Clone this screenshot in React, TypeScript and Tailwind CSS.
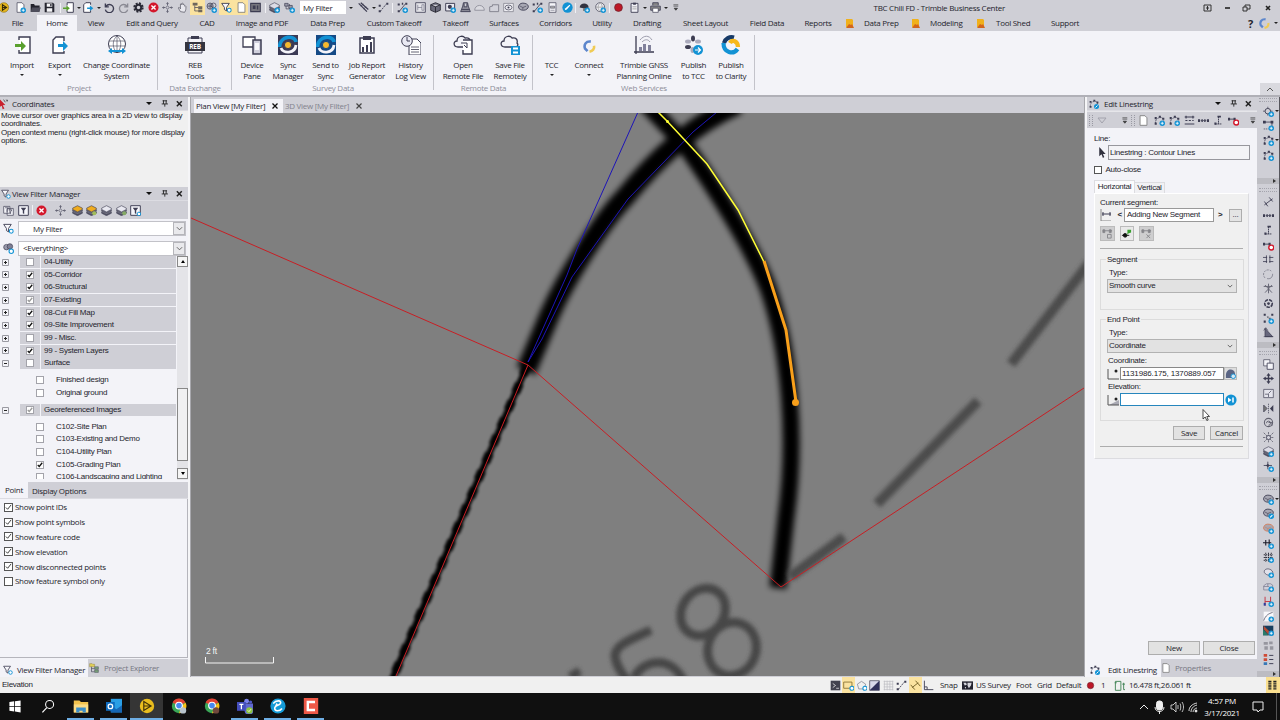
import { ReactNode } from 'react';
import clsx from 'clsx';

const D = '#3d3d52';
const B = '#1292d4';

// ribbon, headers and buttons use the UI face, the pane contents use the sans face
const ui = "font-['Open_Sans',sans-serif] text-[8px] tracking-[-.28px]";
const sans = "font-['Liberation_Sans',sans-serif] text-[8px] tracking-[-.24px]";

/* Small blue badge used in the lower right corner of many tool icons */
const plus = (
  <g>
    <circle cx="12" cy="12" r="4" fill={B} />
    <path d="M12 9.8v4.4M9.8 12h4.4" stroke="#fff" strokeWidth="1.2" />
  </g>
);

const pencil = (
  <g>
    <circle cx="12" cy="12" r="4" fill={B} />
    <path d="M10.4 13.6l3.2-3.2" stroke="#fff" strokeWidth="1.5" />
  </g>
);

const curveNodes = (
  <g>
    <path d="M2 12C2 5 7 3 12 4l2 4" stroke={D} strokeWidth="1.1" strokeDasharray="2 1" fill="none" />
    <path d="M1 3h3v3H1zM7 1h3v3H7zM1 11h3v3H1zM12 4h3v3h-3z" fill={D} />
  </g>
);

const stack = (top: string) => (
  <g stroke={D} strokeWidth=".9">
    <path d="M1 10l7 3.5 7-3.5v2L8 15.5 1 12z" fill="#555568" />
    <path d="M1 7l7 3.5L15 7v2l-7 3.5L1 9z" fill="#777788" />
    <path d="M1 4.5L8 1l7 3.5v2L8 10 1 6.5z" fill={top} />
  </g>
);

const blob = (color: string) => (
  <g>
    <path d="M1 6c1-4 5-5 9-4s5 3 5 5-3 5-7 5-8-2-7-6z" fill="#a7a7b3" stroke={color} strokeWidth="1.3" />
    <path d="M3 6l4 2 5-2M7 8v3" stroke={color} strokeWidth=".9" fill="none" />
  </g>
);

const glyphs: Record<string, ReactNode> = {
  logo: <><circle cx="7" cy="8" r="7" fill="#e6b71e" stroke="#7d6310" strokeWidth=".8" /><path d="M5 4l6 4-6 4zM5 8h6" fill="none" stroke="#33290a" strokeWidth="1.5" /></>,
  newDoc: <><path d="M3 1h7l3 3v11H3z" fill="#fff" stroke={D} />{plus}</>,
  open: <><path d="M1 3h5l1 2h7v9H1z" fill="#22222c" /><path d="M3 8h13l-3 6H1z" fill="#4e4e5c" /></>,
  save: <><path d="M1 1h12l2 2v12H1z" fill="#25252f" /><path d="M4 2h8v5H4zM4 9h8v5H4z" fill="#f5f5f8" /><path d="M9 3h2v3H9z" fill="#25252f" /></>,
  importSm: <><path d="M6 1h9v14H6v-3M6 5V1" fill="#fff" stroke={D} strokeWidth="1.4" /><path d="M0 8h5V5l5 4-5 4v-3H0z" fill="#59a02d" /></>,
  exportSm: <><path d="M11 4V1H4L1 4v11h10v-3" fill="#fff" stroke={D} strokeWidth="1.4" /><path d="M6 8h4V5l5 4-5 4v-3H6z" fill={B} /></>,
  undo: <path d="M2 2v5h5M3 6a6 6 0 1 1-1 5" fill="none" stroke={D} strokeWidth="2" />,
  redo: <path d="M14 2v5H9M13 6a6 6 0 1 0 1 5" fill="none" stroke="#898993" strokeWidth="2" />,
  gear: <><circle cx="8" cy="8" r="6" fill="none" stroke="#2a2a36" strokeWidth="3" strokeDasharray="2.8 1.9" /><circle cx="8" cy="8" r="4" fill="none" stroke="#2a2a36" strokeWidth="3" /></>,
  cancel: <><circle cx="8" cy="8" r="7.3" fill="#d3172b" /><path d="M5 5l6 6M11 5l-6 6" stroke="#fff" strokeWidth="2" /></>,
  pan: <><path d="M8 1v4M8 11v4M1 8h4M11 8h4" stroke="#666676" strokeWidth="1.5" /><circle cx="8" cy="8" r="2" fill="none" stroke="#666676" /><path d="M6 3l2-3 2 3zM6 13l2 3 2-3zM3 6L0 8l3 2zM13 6l3 2-3 2z" fill="#666676" /></>,
  hand: <path d="M5 14L2 9c0-2 2-1 3 1V3c1-1 2 0 2 1V2c1-1 2 0 2 1v1c1-1 2 0 2 1v1c1-1 2 0 2 1 0 3 0 5-2 8z" fill="#e8e8ee" stroke="#5b5b68" strokeWidth="1.1" />,
  tree: <><path d="M1 1h7v4H1zM9 6h6v4H9zM9 11h6v4H9z" fill="#6f685c" /><path d="M4 5v8h5M4 8h5" stroke={D} fill="none" /></>,
  globes: <><circle cx="6" cy="6" r="4.5" fill="#b8b8c4" stroke={D} /><circle cx="11" cy="5" r="3.5" fill="none" stroke={D} /><path d="M2 6h8M6 2v8" stroke={D} />{plus}</>,
  funnel: <><path d="M1 2h11L8 8v5l-3-2V8z" fill="#f7f7fb" stroke={D} strokeWidth="1.3" /><circle cx="12" cy="12" r="2.8" fill="#fff" stroke={B} strokeWidth="1.5" /></>,
  page: <path d="M3 1h7l3 3v11H3z" fill="#fff" stroke="#777" strokeWidth="1.2" />,
  panel: <><path d="M1 2h14v12H1z" fill="#77777f" stroke={D} strokeWidth="1.5" /><path d="M4 5h4v5H4zM10 5h2v6h-2z" fill={D} /></>,
  stackGray: <>{stack('#dcdce6')}{plus}</>,
  stackGold: stack('#f0ac1f'),
  stackGoldPlus: <>{stack('#f0ac1f')}<circle cx="12" cy="12" r="3" fill="#a1bd5b" /></>,
  stackPlain: stack('#e9e9f1'),
  stackPlus: <>{stack('#e9e9f1')}<circle cx="12" cy="12" r="3" fill="#84a965" /></>,
  linked: <><path d="M3 4v6h6M8 3v7" stroke={D} fill="none" /><path d="M1 2h5v4H1zM7 5h5v4H7z" fill="#9b9baa" stroke={D} />{plus}</>,
  measure: <><path d="M1 2l12 12M4 1l11 10" stroke={D} strokeWidth="1.8" fill="none" /><path d="M4 6l4-3M8 10l4-3" stroke={D} /></>,
  angle: <><path d="M3 14L12 3" stroke={D} strokeDasharray="3 1.4" strokeWidth="1.3" /><path d="M1 4h3v3H1zM12 1h3v3h-3zM1 12h3v3H1z" fill={D} /></>,
  anglePlus: <><path d="M3 14L12 3" stroke={D} strokeWidth="1.2" /><path d="M1 2h3v3H1zM7 1h2v3H7zM12 1h3v3h-3zM1 12h3v3H1z" fill={D} />{plus}</>,
  frame: <><path d="M1 1h14v14H1z" fill="#e5e5ea" stroke={D} strokeWidth="1.2" /><path d="M4 4v8M4 8h6M10 4h3v8h-3z" stroke="#77778a" fill="none" /></>,
  cube: <path d="M1 4l7-3 7 3v8l-7 3-7-3zM1 4l7 3 7-3M8 7v8" fill="#6a6a7a" stroke="#20202b" strokeWidth="1.2" />,
  image: <><path d="M1 2h13v11H1z" fill="#ececf2" stroke={D} strokeWidth="1.4" /><circle cx="7" cy="7" r="3" fill={D} />{plus}</>,
  roller: <path d="M5 1h6l1 5 3 8H1l3-8zM3 11h10M6 2v5h4V2" fill="#8e8e9b" stroke={D} strokeWidth="1.3" />,
  dome: <path d="M1 12c0-4 3-7 7-7s7 3 7 7z" fill="#dadae0" stroke="#8b8b97" strokeWidth="1.2" />,
  steps: <path d="M1 14V7l4-1V4h9v10z" fill="#d2d2da" stroke="#777783" strokeWidth="1.2" />,
  target: <><path d="M1 2h14v12H1z" fill="#ededf2" stroke="#777783" /><ellipse cx="8" cy="8" rx="5" ry="3.5" fill="none" stroke={D} /><circle cx="8" cy="8" r="1.5" fill={D} /></>,
  surf: blob(D),
  surfPlus: <>{blob(D)}{plus}</>,
  surfEdit: <>{blob(D)}{pencil}</>,
  surfOrange: <>{blob('#d47b55')}{plus}</>,
  report: <><path d="M3 1h10v14H3z" fill="#f6f6fa" stroke={D} /><path d="M5 6h6v3H5zM5 12h6" fill="#aaa" stroke={D} strokeWidth=".7" /></>,
  pen: <><circle cx="8" cy="8" r="7.5" fill={B} /><path d="M4 12l1-3 6-5 1 1-5 6z" fill="#fff" /></>,
  brush: <><path d="M1 8c0-8 13-8 13 0l-3 2-5-1z" fill="#33333f" /><path d="M6 9v4h4V9" fill="#777" />{plus}</>,
  globe: <><circle cx="7.5" cy="7.5" r="6.5" fill="#ededf2" stroke="#555566" strokeWidth="1.2" /><path d="M1 7.5h13M7.5 1c-4 4-4 9 0 13M7.5 1c4 4 4 9 0 13" stroke="#999" fill="none" />{plus}</>,
  record: <circle cx="8" cy="8" r="5.7" fill="#bd1726" stroke="#66212a" />,
  clipboard: <><path d="M3 2h10v13H3z" fill="#efeff5" stroke={D} strokeWidth="1.3" /><path d="M6 1h4v3H6z" fill={D} /><path d="M5 7h6M5 10h6" stroke="#888" /></>,
  print: <><path d="M4 5V1h8v4M1 6h14v6H1z" fill="#888" stroke={D} strokeWidth="1.2" /><path d="M4 9h8v6H4z" fill="#fff" stroke={D} /></>,
  more: <path d="M5 4h7M5 6h7M6 9h5l-2.5 3z" fill="#333" stroke="#333" strokeWidth=".9" />,
  copyFilter: <><path d="M1 2h9v10H1zM6 5h9v10H6z" fill="#f4f4f8" stroke={D} /><path d="M3 4h5L6 7v3M8 7h5l-2 3v3" stroke={D} fill="none" /></>,
  boxFilter: <><path d="M1 1h14v14H1z" fill="#f6f6fb" stroke={D} strokeWidth="1.4" /><path d="M4 4h8L9 8v5l-2-1V8z" fill={D} /></>,
  boxFilterEdit: <><path d="M1 1h14v14H1z" fill="#f6f6fb" stroke={D} strokeWidth="1.4" /><path d="M4 4h8L9 8v5l-2-1V8z" fill={D} /><circle cx="13" cy="13" r="2.600" fill="#fff" stroke={B} strokeWidth="1.400" /></>,
  fence: <><circle cx="5" cy="6" r="4" fill="#9a9aac" stroke={D} /><circle cx="10" cy="5" r="4" fill="#7e7e93" stroke={D} /><circle cx="12" cy="12" r="3.2" fill="#fff" stroke={B} strokeWidth="1.6" /></>,
  explorer: <><path d="M1 1h4l1 1h3v4H1z" fill="#e0cf57" stroke="#84722c" strokeWidth=".6" /><path d="M4 6v8h5M4 9h5" stroke={D} fill="none" /><path d="M9 6h6v4H9zM9 11h6v4H9z" fill="#7ba27a" stroke={D} strokeWidth=".7" /></>,
  curve: curveNodes,
  curvePlus: <>{curveNodes}{plus}</>,
  curveEdit: <>{curveNodes}{pencil}</>,
  span: <path d="M1 3h14M1 13h14M3 1v4M13 1v4M2 8h3M7 8h3M12 8h2" stroke={D} strokeWidth="1.6" />,
  dots: <><path d="M1 8h14" stroke={D} strokeDasharray="2 1" /><path d="M0 6h3v4H0zM5 6h2v4H5zM9 6h2v4H9zM13 6h3v4h-3z" fill={D} /></>,
  tee: <><path d="M8 2v11M3 13h10" stroke={D} strokeDasharray="2.5 .8" strokeWidth="1.4" /><path d="M6.500 1h5v2.500h-5zM2 11h3v3H2z" fill={D} /></>,
  segDel: <><path d="M1 6h10" stroke={D} strokeWidth="1.3" /><path d="M0 4h3v4H0zM8 4h3v4H8z" fill={D} /><circle cx="12" cy="11" r="3.600" fill="#fff" stroke="#d3172b" strokeWidth="2" /></>,
  segPlus: <><path d="M2 3h11v9" stroke={D} fill="none" strokeWidth="1.200" /><path d="M0 1h4v4H0zM11 1h4v4h-4z" fill={D} /><path d="M1 13h7" stroke={D} strokeDasharray="2 1" />{plus}</>,
  pointPlus: <><path d="M7 1v13M0 7.500h14" stroke={D} /><circle cx="7" cy="7.500" r="4" fill="#cfcfd6" stroke={D} strokeWidth="1.300" />{plus}</>,
  slash: <path d="M2 13l12-9M2 8l5 7M9 2l5 6" stroke={D} strokeWidth="1.300" />,
  offset: <path d="M0 5h6M9 5h6M0 11h6M9 11h6M5 2v11M10 2v11" stroke={D} strokeWidth="1.200" />,
  arcs: <><path d="M3 13A6 6 0 0 1 12 3" fill="none" stroke="#686878" strokeDasharray="3 1.500" /><path d="M6 14c6 1 8-3 8-7" fill="none" stroke="#686878" /></>,
  star: <path d="M8 1v14M1 5h13M3 14L13 3M3 3l10 11" stroke="#666675" strokeWidth="1.400" />,
  ring: <><circle cx="8" cy="8" r="5.500" fill="none" stroke={D} strokeWidth="2.300" strokeDasharray="5 1.500" /><circle cx="8" cy="8" r="2" fill={D} /></>,
  ptsPlus: <><path d="M1 1h3v3H1zM12 1h3v3h-3zM1 11h3v3H1zM6 5h2v2H6zM9 7h2v2H9z" fill={D} /><path d="M6 5l4 5" stroke="#999" />{plus}</>,
  wedge: <><path d="M3 14V2l11 12z" fill="#66667c" stroke={D} strokeWidth="1.200" /><path d="M1 5l3-4 3 4M1 14h14" stroke={D} fill="none" /></>,
  copy: <><path d="M1 1h9v9H1z" fill="#f4f4f8" stroke={D} /><path d="M6 6h9v9H6z" fill="#f4f4f8" stroke={D} strokeWidth="1.200" /></>,
  move: <path d="M8 0l3 4H9v3h3V5l4 3-4 3V9H9v3h2l-3 4-3-4h2V9H4v2L0 8l4-3v2h3V4H5z" fill={D} />,
  scale: <><path d="M1 2h14v12H1z" fill="#e4e4ec" stroke={D} /><path d="M3 9h5v4M12 4L8 8" stroke={D} fill="none" /></>,
  mirror: <><path d="M8 1v14" stroke={D} strokeDasharray="2 1" /><path d="M1 3l5 5-5 5z" fill="#777" stroke={D} /><path d="M15 3l-5 5 5 5z" fill={D} /></>,
  rotate: <><circle cx="8" cy="8" r="6" fill="none" stroke="#61616f" strokeWidth="1.500" /><path d="M5 9a3 3 0 1 1 3 3M8 8h5v5" fill="none" stroke="#61616f" strokeWidth="1.300" /></>,
  explode: <><path d="M1 1l14 14M15 1L1 15M8 0v16M0 8h16" stroke="#555564" strokeWidth="1.100" strokeDasharray="3 1" /><circle cx="8" cy="8" r="3" fill="#d3d3dc" stroke={D} strokeWidth="1.200" /></>,
  spark: <><path d="M7 1v11M1 6.500h12" stroke={D} strokeWidth="1.200" /><path d="M7 4l2.500 2.500L7 9 4.500 6.500z" fill={D} />{plus}</>,
  ticks: <><path d="M0 7h12M4 3v8M9 2v11" stroke="#1b1b28" strokeWidth="1.600" />{plus}</>,
  grid: <><path d="M4 1v13M8 1v13M12 1v13M1 4h13M1 8h13M1 12h13" stroke="#22222e" strokeWidth="1.300" strokeDasharray="2 1" />{plus}</>,
  gridPlain: <path d="M2 1v14M6 1v14M10 1v14M14 1v14M1 2h14M1 6h14M1 10h14M1 14h14" stroke="#bcbcc2" />,
  boundary: <><path d="M2 8c-1-4 3-6 7-5s6 4 5 7-9 3-12-2z" fill="#e1e1ea" stroke="#55556a" strokeWidth="1.200" />{plus}</>,
  house: <><path d="M1 13V7l4-3h6l3 2v7z" fill="#cfcfdb" stroke="#77778a" /><path d="M1 8h8M7 4v4" stroke="#77778a" />{plus}</>,
  redLink: <><path d="M3 1v13M11 1v9M3 8h8" stroke="#c4404e" strokeWidth="1.500" /><path d="M1 10h3v4H1z" fill="#2b3fa0" />{plus}</>,
  chartSm: <><path d="M1 1h14v14H1z" fill="#f8f8fb" /><path d="M1 14C4 6 8 4 14 2" stroke={D} fill="none" />{plus}</>,
  heat: <><path d="M0 1h15v14H0z" fill="#173e5e" /><path d="M1 1l13 13H8L1 6z" fill="#b34c35" /><path d="M0 6l8 9H0z" fill="#2b7b6a" />{plus}</>,
  blocks: <path d="M1 3h6v4H1zM9 2h5v4H9zM2 9h5v5H2zM10 9h5v5h-5z" fill="#96969f" />,
  legend: <><path d="M1 0h5v4H1zM1 6h5v4H1z" fill="#cf4b36" /><path d="M1 12h5v4H1z" fill="#3778b6" /><path d="M9 2h6M9 8h6M9 14h6" stroke={D} strokeWidth="1.400" /></>,
  terminal: <><path d="M1 1h14v14H1z" fill="#42424e" /><path d="M4 5l4 3-4 3M9 12h4" stroke="#fff" fill="none" /></>,
  boxPick: <><path d="M1 3h12v9H1z" fill="none" stroke="#8a7437" strokeWidth="1.300" /><circle cx="13" cy="12" r="3" fill="#fff" stroke={B} strokeWidth="1.500" /></>,
  polyPick: <><path d="M2 6l6-4 6 4-2 7H4z" fill="none" stroke="#8c8c96" strokeWidth="1.200" /><circle cx="13" cy="12" r="3" fill="#fff" stroke={B} strokeWidth="1.500" /></>,
  half: <><path d="M1 1h14v14H1z" fill="#d8d8ea" stroke={D} /><path d="M15 1v14H1z" fill="#30305a" /></>,
  dim: <path d="M1 7l6 7M8 1l7 8M3 11l9-7" stroke="#6c5a21" strokeWidth="1.300" />,
  corner: <path d="M2 1v13h13M6 14v-4H2" stroke={D} fill="none" strokeWidth="1.300" />,
  world: <><path d="M0 2h16v12H0z" fill="#22222e" /><path d="M2 4h4l1 3-3 1zM8 4h6l-1 4-3 4-2-4zM4 10h2l-1 3z" fill="#d5d5dc" /></>,
  bracket: <path d="M2 15V2h8v13zM1 4h3M12 6h4M14 4v10h2" stroke="#3c8050" fill="none" strokeWidth="1.300" />,
  list: <path d="M3 1v14M11 1v14" stroke="#222" strokeWidth="5" strokeDasharray="2 1" />,
};

function Glyph({ name, className = 'size-[11px]' }: { name: string; className?: string }) {
  return (
    <svg viewBox="0 0 16 16" className={clsx('shrink-0', className)}>
      {glyphs[name]}
    </svg>
  );
}

function Cell({ name, w = 'w-[14.600px]', on }: { name: string; w?: string; on?: boolean }) {
  return (
    <div className={clsx('flex h-full shrink-0 items-center justify-center', w, on && 'bg-[#fbe3a0]')}>
      <Glyph name={name} />
    </div>
  );
}

function Caret({ w = 'w-[7px]' }: { w?: string }) {
  return (
    <div className={clsx('flex shrink-0 justify-center', w)}>
      <div className="border-x-[2px] border-t-[2px] border-x-transparent border-t-[#222]" />
    </div>
  );
}

function Sep({ className }: { className?: string }) {
  return <div className={clsx('h-[10px] w-px shrink-0 bg-[#f0f0f4]', className)} />;
}

function QuickAccess() {
  return (
    <div className="flex h-[15px] shrink-0 items-center">
      <div className="flex h-full w-[1005px] shrink-0 items-center">
        <Cell name="logo" w="w-[15px] -ml-[3px]" />
        <Cell name="newDoc" w="w-4" />
        <Cell name="open" w="w-[14px]" />
        <Cell name="save" w="w-[15px]" />
        <Sep className="ml-[3px]" />
        <Cell name="importSm" w="w-[14px]" />
        <Caret />
        <Cell name="exportSm" w="w-[13px]" />
        <Caret />
        <Cell name="undo" />
        <Cell name="redo" />
        <Cell name="gear" />
        <Cell name="cancel" />
        <Cell name="pan" />
        <Cell name="hand" />
        <Cell name="tree" on w="w-[15px]" />
        <Cell name="globes" />
        <Cell name="funnel" on />
        <Cell name="page" on />
        <Cell name="panel" w="w-[15px]" />
        <Sep className="ml-[2px]" />
        <Cell name="stackGray" w="w-4" />
        <Cell name="linked" />
        <div className="ml-[3px] flex h-[13px] w-[46px] items-center bg-white pl-[3px]">My Filter</div>
        <Caret w="w-[10px]" />
        <Cell name="measure" />
        <Caret w="w-[6px]" />
        <Cell name="angle" />
        <Sep className="ml-[1px]" />
        <Cell name="anglePlus" w="w-[19px]" />
        <Cell name="frame" w="w-4" />
        <Cell name="cube" w="w-[15px]" />
        <Cell name="image" />
        <Cell name="roller" />
        <Cell name="dome" />
        <Cell name="steps" />
        <Cell name="target" />
        <Cell name="surf" />
        <Cell name="anglePlus" />
        <Cell name="report" />
        <Cell name="pen" />
        <Sep className="ml-[1px]" />
        <Cell name="brush" w="w-[17px]" />
        <Cell name="globe" />
        <Sep className="ml-[1px]" />
        <Cell name="record" w="w-[17px]" />
        <Cell name="clipboard" w="w-[14px]" />
        <Caret />
        <Cell name="print" w="w-[14px]" />
        <Caret />
        <Cell name="more" w="w-3" />
        <span className="ml-auto">TBC Chili FD - Trimble Business Center</span>
      </div>
      <div className="ml-auto flex items-center pr-[7px]">
        <svg viewBox="0 0 70 12" className="h-3 w-[70px]" fill="none" stroke="#222" strokeWidth="1.200">
          <path d="M1 3h7v6H1zM4.500 4v4M3 6h3" strokeWidth=".9" />
          <path d="M22 6h5" strokeWidth="1.600" />
          <path d="M40 5h4v4h-4zM42 5V3h5v4h-3" strokeWidth=".9" />
          <path d="M63 4l4 4M67 4l-4 4" strokeWidth="1.600" />
        </svg>
      </div>
    </div>
  );
}

const menuTabs = [
  { label: 'File', w: 'w-[37px] pr-[2px]' },
  { label: 'Home', w: 'w-10 bg-[#f3f3f8]' },
  { label: 'View', w: 'w-[38px]' },
  { label: 'Edit and Query', w: 'w-[74px]' },
  { label: 'CAD', w: 'w-9' },
  { label: 'Image and PDF', w: 'w-[74px]' },
  { label: 'Data Prep', w: 'w-[57px]' },
  { label: 'Custom Takeoff', w: 'w-[76px]' },
  { label: 'Takeoff', w: 'w-[47px]' },
  { label: 'Surfaces', w: 'w-[50px]' },
  { label: 'Corridors', w: 'w-[53px]' },
  { label: 'Utility', w: 'w-10' },
  { label: 'Drafting', w: 'w-[50px]' },
  { label: 'Sheet Layout', w: 'w-[67px]' },
  { label: 'Field Data', w: 'w-14' },
  { label: 'Reports', w: 'w-[46px]' },
];

function AppMark() {
  return (
    <svg viewBox="0 0 8 9" className="h-[9px] w-2">
      <path d="M0 0h6l1 1v7H0z" fill="#f0b11c" />
      <path d="M0 9l3-4 2 1 1-1 2 4z" fill="#d3661c" />
    </svg>
  );
}

function Swirl({ className }: { className: string }) {
  return (
    <svg viewBox="0 0 20 20" className={className} fill="none" strokeWidth="4">
      <path d="M12 2.500C5 1 1 7 3 13l4 4" stroke="#5c86cc" />
      <path d="M17 9c1 5-2 8-7 9" stroke="#f0cb55" />
    </svg>
  );
}

function MenuTabs() {
  return (
    <div className="flex h-4 shrink-0 items-stretch">
      {menuTabs.map((t) => (
        <div key={t.label} className={clsx('flex shrink-0 items-center justify-center', t.w)}>
          {t.label}
        </div>
      ))}
      <div className="flex w-[239px] items-center pl-[5px]">
        <AppMark />
        <span className="w-[58px] pl-[10px]">Data Prep</span>
        <AppMark />
        <span className="w-[57px] pl-[10px]">Modeling</span>
        <AppMark />
        <span className="w-[66px] pl-[11px]">Tool Shed</span>
        <span>Support</span>
      </div>
      <div className="ml-auto flex items-center gap-[6px]">
        <span className="text-[11px] font-bold">?</span>
        <Swirl className="size-[11px]" />
        <Caret w="w-[5px] -ml-[3px] mr-[2px]" />
      </div>
    </div>
  );
}

const sync = (bg: string) => (
  <>
    <path d="M0 0h20v20H0z" fill={bg} />
    <path d="M1.500 12C2 0 17 0 18 7" stroke={B} strokeWidth="3.600" fill="none" />
    <path d="M3 13c2 6 14 6 15-3" stroke="#f4f4fa" strokeWidth="2.800" fill="none" />
    <circle cx="10" cy="10" r="3.600" fill="#f5b82e" stroke={bg} strokeWidth="1" />
  </>
);

const cloud = <path d="M5 12c-5 0-5-6-1-6 0-5 6-6 8-3 4-1 6 2 5 5 2 2 0 4-2 4z" fill="#f3f3f8" stroke={D} strokeWidth="1.300" />;

const big: Record<string, ReactNode> = {
  import: <><path d="M7 5V2h11v16H7v-3" fill="#fff" stroke={D} strokeWidth="1.400" /><path d="M3 9h6V6l5 5-5 5v-4H3z" fill="#59a02d" /></>,
  export: <><path d="M14 6V2H6L3 5v13h11v-2" fill="#fff" stroke={D} strokeWidth="1.400" /><path d="M8 9h5V6l5 5-5 5v-4H8z" fill={B} /></>,
  coord: <><circle cx="10" cy="9" r="8.500" fill="#fff" stroke={D} /><path d="M2 6h16M2 11h16M10 1v17M10 1C5 5 5 13 10 18M10 1c5 4 5 12 0 17" stroke={D} strokeWidth=".6" fill="none" /><path d="M1 16l4-3v2h10v-2l4 3-4 3v-2H5v2z" fill={B} /></>,
  reb: <><path d="M3 3h14v15H3z" fill="#f5f5fa" stroke={D} /><path d="M6 1h8v3H6z" fill={D} /><path d="M0 7h20v9H0z" fill="#34343f" /><text x="10" y="13.700" fontSize="6.500" fontWeight="bold" fill="#fff" textAnchor="middle">REB</text></>,
  device: <><path d="M1 2h12v10H1z" fill="#fff" stroke={D} strokeWidth="1.300" /><path d="M11 5h8v14h-8z" fill="#cfcfdc" stroke={D} strokeWidth="1.500" /><path d="M13 8h4v7h-4z" fill="#f7f7fb" /></>,
  sync1: sync('#3b3a55'),
  sync2: sync('#154a86'),
  job: <><path d="M3 3h14v15H3z" fill="#fff" stroke={D} strokeWidth="1.500" /><path d="M6 1h8v4H6z" fill={D} /><path d="M5 12h2v5H5zM9 10h2v7H9zM13 7h2v10h-2z" fill={D} /></>,
  history: <><path d="M8 4h8l4 4v12H8z" fill="#fff" stroke={D} /><path d="M10 12h8M10 14.500h8M10 17h8" stroke={D} strokeWidth=".8" /><circle cx="6" cy="6" r="5.300" fill="#e9e9f3" stroke={D} /><path d="M6 2v4h3" stroke={D} fill="none" /></>,
  openRemote: <>{cloud}<path d="M10 5h9v14h-9v-4" fill="#fff" stroke={D} strokeWidth="1.400" /><path d="M8 8h6v5M14 13l-3-3" stroke={D} fill="none" /></>,
  saveRemote: <>{cloud}<path d="M11 11h9v9h-9z" fill={B} /><path d="M13 12.500h5v2h-5zM13 16.500h5v2h-5z" fill="#fff" /></>,
  gnss: <><path d="M2 1v18M0 17h20" stroke={D} strokeWidth="1.300" /><path d="M5 12h3v4H5zM9 9h3v7H9zM14 10h3v6h-3z" fill="#81819b" /><path d="M6 5c4-5 9-5 12 0M8 7c3-3 6-3 8 0" stroke="#9d9dad" fill="none" /></>,
  tcc: <><g fill={D}><ellipse cx="9" cy="3.500" rx="2" ry="3" /><ellipse cx="14" cy="6.500" rx="3" ry="2" fill="#aaaabc" /><ellipse cx="4" cy="6.500" rx="3" ry="2" fill="#aaaabc" /><ellipse cx="4" cy="12" rx="3" ry="2" /><ellipse cx="8.500" cy="15" rx="2" ry="3" fill="#aaaabc" /></g><circle cx="14" cy="15" r="5" fill={B} /><path d="M11 15h5M14 12.500l2.500 2.500-2.500 2.500" stroke="#fff" fill="none" strokeWidth="1.200" /></>,
  clarity: <g fill="none" strokeWidth="4.200"><path d="M13 2.500A8 8 0 0 0 3 8" stroke="#173a68" /><path d="M2.500 8c0 10 10 12 14 6" stroke={B} /><path d="M9 8c2-4 8-2 8 4" stroke="#f7b91c" /></g>,
};

function Tool({ icon, w, lines, caret }: { icon?: string; w: string; lines: string[]; caret?: boolean }) {
  return (
    <div className={clsx('flex shrink-0 flex-col items-center pt-[4px]', w)}>
      <div className="h-[22px]">
        {icon === 'connect' ? (
          <Swirl className="mt-[5px] size-[13px]" />
        ) : (
          <svg viewBox="0 0 20 20" className="size-5">
            {icon && big[icon]}
          </svg>
        )}
      </div>
      <div className="mt-[3px] text-center leading-[10.700px] whitespace-nowrap">
        {lines.map((l) => (
          <div key={l}>{l}</div>
        ))}
      </div>
      {caret && <div className="pt-[3px]"><Caret /></div>}
    </div>
  );
}

function Group({ label, w, children }: { label: string; w: string; children: ReactNode }) {
  return (
    <div className={clsx('relative flex shrink-0 flex-col', w)}>
      <div className="flex h-[51px] justify-center">{children}</div>
      <div className="text-center leading-[11px] text-[#8d8d98]">{label}</div>
      <div className="absolute top-1 right-0 h-[55px] w-px bg-[#c3c3ca]" />
    </div>
  );
}

function Ribbon() {
  return (
    <div className="flex h-[64px] shrink-0 bg-[#f3f3f8]">
      <Group label="Project" w="w-[158px]">
        <Tool icon="import" w="w-[38px]" lines={['Import']} caret />
        <Tool icon="export" w="w-[37px]" lines={['Export']} caret />
        <Tool icon="coord" w="w-[77px]" lines={['Change Coordinate', 'System']} />
      </Group>
      <Group label="Data Exchange" w="w-[74px]">
        <Tool icon="reb" w="w-10" lines={['REB', 'Tools']} />
      </Group>
      <Group label="Survey Data" w="w-[202px]">
        <Tool icon="device" w="w-[37px]" lines={['Device', 'Pane']} />
        <Tool icon="sync1" w="w-[35px]" lines={['Sync', 'Manager']} />
        <Tool icon="sync2" w="w-10" lines={['Send to', 'Sync']} />
        <Tool icon="job" w="w-[43px]" lines={['Job Report', 'Generator']} />
        <Tool icon="history" w="w-11" lines={['History', 'Log View']} />
      </Group>
      <Group label="Remote Data" w="w-[99px]">
        <Tool icon="openRemote" w="w-[53px]" lines={['Open', 'Remote File']} />
        <Tool icon="saveRemote" w="w-[41px]" lines={['Save File', 'Remotely']} />
      </Group>
      <Group label="Web Services" w="w-[222px]">
        <Tool w="w-8" lines={['TCC']} caret />
        <Tool icon="connect" w="w-[43px]" lines={['Connect']} caret />
        <Tool icon="gnss" w="w-[67px]" lines={['Trimble GNSS', 'Planning Online']} />
        <Tool icon="tcc" w="w-8" lines={['Publish', 'to TCC']} />
        <Tool icon="clarity" w="w-[43px]" lines={['Publish', 'to Clarity']} />
      </Group>
      <div className="mt-auto ml-auto flex h-[12px] w-5 items-center justify-center bg-[#d9d9df]">
        <svg viewBox="0 0 8 5" className="h-[5px] w-2" fill="none" stroke="#555"><path d="M1 4l3-3 3 3" /></svg>
      </div>
    </div>
  );
}

function PaneHeader({ title, icon, gap = 'gap-[4px]' }: { title: string; icon: string; gap?: string }) {
  return (
    <div className={clsx('flex h-[14px] shrink-0 items-center border-b border-[#dcdce2] bg-[#cfcfd6]', ui, gap)}>
      {icon === 'xy' ? (
        <svg viewBox="0 0 9 12" className="h-3 w-[8px]"><path d="M0 1l6 6-3 .5L5 11l-2 1-1-4-2 1z" fill="#c9202d" /><path d="M4 1l2 3M7 1l1 2 1-2" stroke="#222" strokeWidth=".7" fill="none" /></svg>
      ) : (
        <Glyph name={icon} className="size-[10px]" />
      )}
      <span>{title}</span>
      <div className="mr-[4px] ml-auto flex items-center">
        <div className="border-x-[3px] border-t-[3px] border-x-transparent border-t-[#111]" />
        <svg viewBox="0 0 28 9" className="ml-[7px] h-[9px] w-[25px]" fill="none" stroke="#222">
          <path d="M5 1v4M8 1v4M4 1.500h5M3 5h7M6.500 5v3" />
          <path d="M20 2l5.500 5.500M25.500 2L20 7.500" strokeWidth="1.700" />
        </svg>
      </div>
    </div>
  );
}

function Box({ state, className = 'size-[8px]' }: { state: 'on' | 'off' | 'gray'; className?: string }) {
  return (
    <div className={clsx('shrink-0 border border-[#a3a3aa] bg-white', className)}>
      {state !== 'off' && (
        <svg viewBox="0 0 8 8" className="size-full" fill="none" stroke={state === 'on' ? '#111' : '#999'} strokeWidth="1.700">
          <path d="M1 4l2 2 4-5" />
        </svg>
      )}
    </div>
  );
}

type LayerState = 'on' | 'off' | 'gray';

const layers: [string, LayerState, string][] = [
  ['04-Utility', 'off', '+'],
  ['05-Corridor', 'on', '+'],
  ['06-Structural', 'on', '+'],
  ['07-Existing', 'gray', '+'],
  ['08-Cut Fill Map', 'on', '+'],
  ['09-Site Improvement', 'on', '+'],
  ['99 - Misc.', 'off', '+'],
  ['99 - System Layers', 'on', '+'],
  ['Surface', 'off', '-'],
];

const images: [string, LayerState][] = [
  ['C102-Site Plan', 'off'],
  ['C103-Existing and Demo', 'off'],
  ['C104-Utility Plan', 'off'],
  ['C105-Grading Plan', 'on'],
  ['C106-Landscaping and Lighting', 'off'],
];

function LayerRow({ label, state, sign }: { label: string; state: LayerState; sign: string }) {
  return (
    <div className="flex h-[12.670px] shrink-0 items-stretch">
      <div className="flex w-5 items-center pl-[2px]">
        <svg viewBox="0 0 7 7" className="size-[7px]" fill="none">
          <path d="M.5.500h6v6h-6z" stroke="#9a9aa2" />
          <path d={sign === '+' ? 'M2 3.500h3M3.500 2v3' : 'M2 3.500h3'} stroke="#222" />
        </svg>
      </div>
      <div className="mb-[.7px] flex w-5 items-center justify-center bg-[#cfcfd6]">
        <Box state={state} />
      </div>
      <div className="mb-[.7px] ml-px flex flex-1 items-center bg-[#cfcfd6] pl-[3px]">{label}</div>
    </div>
  );
}

function ChildRow({ label, state }: { label: string; state: LayerState }) {
  return (
    <div className="flex h-[12.670px] shrink-0 items-center pl-9">
      <Box state={state} />
      <span className="pl-[12px]">{label}</span>
    </div>
  );
}

function Combo({ children, className }: { children: ReactNode; className?: string }) {
  return (
    <div className={clsx('flex h-[15px] w-[168px] items-center border border-[#c2c2c8] bg-white', className)}>
      {children}
      <div className="ml-auto flex h-[13px] w-[12px] items-center justify-center border border-[#b5b5ba] bg-[#e9e9ec]">
        <svg viewBox="0 0 8 5" className="h-[5px] w-[7px]" fill="none" stroke="#555"><path d="M1 1l3 3 3-3" /></svg>
      </div>
    </div>
  );
}

const pointOptions = [
  'Show point IDs',
  'Show point symbols',
  'Show feature code',
  'Show elevation',
  'Show disconnected points',
  'Show feature symbol only',
];

function LeftPane() {
  return (
    <div className="flex w-[188px] shrink-0 flex-col bg-[#f3f3f8]">
      <PaneHeader title="Coordinates" icon="xy" />
      <div className="h-[76px] shrink-0 bg-[#f0f0f0] pt-px pl-px leading-[8.300px] whitespace-nowrap">
        <div>Move cursor over graphics area in a 2D view to display</div>
        <div>coordinates.</div>
        <div>Open context menu (right-click mouse) for more display</div>
        <div>options.</div>
      </div>
      <PaneHeader title="View Filter Manager" icon="funnel" gap="gap-[1px] pl-px" />
      <div className="flex h-[18px] shrink-0 items-center bg-[#cfcfd6]">
        <Cell name="copyFilter" w="w-4" />
        <Cell name="boxFilter" />
        <Sep className="ml-px" />
        <Cell name="cancel" w="w-[18px]" />
        <Cell name="pan" w="w-[20px]" />
        <Cell name="stackGold" w="w-[14px]" />
        <Cell name="stackGoldPlus" />
        <Cell name="stackPlain" />
        <Cell name="stackPlus" />
        <Cell name="boxFilterEdit" />
      </div>
      <div className={clsx('flex h-[19px] shrink-0 items-center pl-[3px]', ui)}>
        <Glyph name="funnel" />
        <Combo className="ml-1"><span className="pl-[14px]">My Filter</span></Combo>
      </div>
      <div className={clsx('flex h-[18px] shrink-0 items-center pt-[2px] pl-[3px]', ui)}>
        <Glyph name="fence" />
        <Combo className="ml-1"><span className="pl-[4px]">&lt;Everything&gt;</span></Combo>
      </div>
      <div className="flex h-[224px] shrink-0">
        <div className="flex h-[223px] w-[176px] shrink-0 flex-col overflow-hidden">
          <div className="flex flex-col">
            {layers.map(([label, state, sign]) => (
              <LayerRow key={label} label={label} state={state} sign={sign} />
            ))}
          </div>
          <div className="pt-[4px] pb-[4.500px]">
            <ChildRow label="Finished design" state="off" />
            <ChildRow label="Original ground" state="off" />
          </div>
          <LayerRow label="Georeferenced Images" state="gray" sign="-" />
          <div className="pt-[4px]">
            {images.map(([label, state]) => (
              <ChildRow key={label} label={label} state={state} />
            ))}
          </div>
        </div>
        <div className="ml-px flex w-[11px] flex-col bg-[#e4e4e8]">
          <div className="flex h-[11px] items-center justify-center border border-[#888] bg-[#f5f5f5]">
            <div className="border-x-[2.500px] border-b-[3px] border-x-transparent border-b-black" />
          </div>
          <div className="mt-[121px] h-[73px] border border-[#888] bg-[#f0f0f2]" />
          <div className="mt-[7px] flex h-[11px] items-center justify-center border border-[#888] bg-[#f5f5f5]">
            <div className="border-x-[2.500px] border-t-[3px] border-x-transparent border-t-black" />
          </div>
        </div>
      </div>
      <div className={clsx('mt-[2px] flex h-[17px] shrink-0 items-stretch border-b border-[#dcdce2] bg-[#cfcfd6]', ui)}>
        <div className="flex w-7 items-center justify-center bg-[#f3f3f8]">Point</div>
        <div className="flex items-center pt-[2px] pl-1">Display Options</div>
      </div>
      <div className={clsx('flex min-h-0 flex-1 flex-col border-r border-b border-[#b5b5bc] pt-[1px] pl-[4px]', ui)}>
        {pointOptions.map((label, i) => (
          <div key={label} className="flex h-[14.800px] items-center gap-[2px]">
            <div className="size-[9px] border border-[#555] bg-white">
              {i < 5 && <svg viewBox="0 0 8 8" className="size-full" fill="none" stroke="#222"><path d="M1 4l2 2 4-5" /></svg>}
            </div>
            {label}
          </div>
        ))}
      </div>
      <div className={clsx('flex h-[19px] shrink-0 items-stretch pt-px', ui)}>
        <div className="flex w-[88px] items-center gap-[4px] pt-[3px] pl-[3px]"><Glyph name="funnel" className="size-[10px]" />View Filter Manager</div>
        <div className="flex flex-1 items-center gap-[5px] bg-[#cfcfd6] pl-px text-[#777783]"><Glyph name="explorer" className="size-[10px]" />Project Explorer</div>
      </div>
    </div>
  );
}

function PlanView() {
  return (
    <div className="flex w-[893px] shrink-0 flex-col">
      <div className={clsx('flex h-4 shrink-0 items-end bg-[#cfcfd6]', ui)}>
        <div className="ml-[3px] flex h-[14px] w-[89px] items-center justify-between bg-[#f3f3f8] pr-[5px] pl-[2px]">
          Plan View [My Filter]
          <svg viewBox="0 0 6 6" className="size-[6px]" stroke="#111" strokeWidth="1.300"><path d="M.5.500l5 5M5.500.500l-5 5" /></svg>
        </div>
        <div className="flex h-[14px] w-[79px] items-center justify-between pl-[2px] text-[#82828c]">
          3D View [My Filter]
          <svg viewBox="0 0 6 6" className="size-[6px]" stroke="#444" strokeWidth="1.200"><path d="M.5.500l5 5M5.500.500l-5 5" /></svg>
        </div>
      </div>
      <svg viewBox="191 113 893 563" className="h-[563px] w-[893px] bg-[#7f7f7f]" fill="none">
        <defs>
          <filter id="soft" x="-10%" y="-10%" width="120%" height="120%"><feGaussianBlur stdDeviation="3.400" /></filter>
          <filter id="soft2" x="-10%" y="-10%" width="120%" height="120%"><feGaussianBlur stdDeviation="2.300" /></filter>
          <filter id="soft1" x="-10%" y="-10%" width="120%" height="120%"><feGaussianBlur stdDeviation="1.600" /></filter>
        </defs>
        <g stroke="#000" filter="url(#soft)">
          <path d="M526 371L550 314C565 280 600 223 625 197C655 160 690 126 738 104" strokeWidth="20" strokeLinejoin="round" />
          <path d="M640 97L685 145C713 185 752 246 768 288C790 350 797 440 786 517L778 588" strokeWidth="17" />
        </g>
        <g stroke="#000" filter="url(#soft1)">
          <path d="M527 366L391 682" strokeWidth="6.500" />
          <path d="M527 366L391 682" strokeWidth="9" strokeDasharray="10 9" />
        </g>
        <g stroke="#4b4b4b" strokeWidth="10" filter="url(#soft2)">
          <path d="M1090 262L1011 364" />
          <path d="M978 401L877 504" />
          <path d="M844 537L790 577" />
        </g>
        <g stroke="#474747" strokeWidth="9" filter="url(#soft2)">
          <ellipse cx="703" cy="612" rx="21" ry="25" transform="rotate(35 703 612)" />
          <ellipse cx="732" cy="649" rx="24" ry="27" transform="rotate(20 732 649)" />
          <path d="M651 630C630 640 615 645 615 656C616 668 624 674 630 686M634 678C642 660 672 653 685 684M570 677L580 671" />
        </g>
        <g stroke="#c81e24" strokeWidth="1">
          <path d="M191 218L528 365L396 676M528 365L781 587L1084 388" />
        </g>
        <g stroke="#1d14b8" strokeWidth="1">
          <path d="M638 112L577 249L567 275L528 362" />
          <path d="M528 362L542 339L572 277L628 199L693 132L717 112" />
        </g>
        <path d="M658 112L667 121L707 164L738 210L764 262" stroke="#ffff35" strokeWidth="1.500" />
        <circle cx="667.500" cy="121.500" r="1.500" fill="#ffff35" />
        <path d="M764 261L786 330L796 402" stroke="#f9a01b" strokeWidth="3" />
        <circle cx="795.500" cy="402.500" r="3.500" fill="#f9a01b" />
        <path d="M205.500 657v6h68v-6" stroke="#f4f4f4" />
        <text x="206" y="654" fill="#f4f4f4" fontSize="8.500">2 ft</text>
      </svg>
    </div>
  );
}

function Select({ children }: { children: ReactNode }) {
  return (
    <div className="flex h-[14px] w-[130px] items-center border border-[#b2b2b2] bg-[#e2e2e2] pl-[1px]">
      {children}
      <svg viewBox="0 0 8 5" className="mr-[3px] ml-auto h-[4px] w-[6px]" fill="none" stroke="#444"><path d="M1 1l3 3 3-3" /></svg>
    </div>
  );
}

function Btn({ children, className }: { children: ReactNode; className: string }) {
  return (
    <div className={clsx('flex h-[14px] items-center justify-center border border-[#adadad] bg-[#e2e2e2]', ui, className)}>
      {children}
    </div>
  );
}

function SegButton({ children, off }: { children: ReactNode; off?: boolean }) {
  return (
    <div className={clsx('flex size-[14.500px] items-center justify-center border border-[#bbb]', off ? 'bg-[#cececf]' : 'bg-[#e9e9e9]')}>
      <svg viewBox="0 0 12 12" className="size-[11px]" fill="none" stroke={off ? '#85858a' : '#111'}>
        {children}
      </svg>
    </div>
  );
}

function EditPane() {
  return (
    <div className="flex w-[170px] shrink-0 flex-col bg-[#f3f3f8]">
      <PaneHeader title="Edit Linestring" icon="curveEdit" gap="gap-[5px] pl-[2px]" />
      <div className="flex h-[17px] shrink-0 items-center border-t border-[#e6e6ea] bg-[#cfcfd6]">
        <div className="ml-[2px] h-[11px] w-[4px] border-x border-dotted border-[#9999a3]" />
        <svg viewBox="0 0 10 7" className="ml-[4px] h-[7px] w-[10px]" fill="none" stroke="#a3a3ad"><path d="M1 1h8L5 6z" /></svg>
        <div className="flex h-full w-[23px] items-center justify-end"><Glyph name="more" /></div>
        <div className="ml-[1px] h-[11px] w-[4px] border-x border-dotted border-[#9999a3]" />
        <Cell name="page" w="w-[17px]" />
        <Cell name="curvePlus" w="w-[15px]" />
        <Cell name="curvePlus" w="w-[15px]" />
        <Cell name="span" />
        <Cell name="dots" />
        <Cell name="tee" />
        <Cell name="segDel" w="w-[15px]" />
        <div className="-mr-px ml-auto"><Glyph name="more" /></div>
      </div>
      <div className="flex flex-1 flex-col pt-[5px] pl-[7px]">
        <div className="leading-[12px]">Line:</div>
        <div className="flex h-[15px] items-center">
          <svg viewBox="0 0 8 12" className="ml-[4px] h-[11px] w-[8px]"><path d="M1 0v10l2.500-2L5 12l1.500-1L5 7.500h3z" fill="#30303e" /></svg>
          <div className="ml-[2px] flex h-[15px] w-[142px] items-center border border-[#97979d] bg-[#f3f3f6] pl-[1px]">Linestring : Contour Lines</div>
        </div>
        <div className="mt-[5px] flex h-[10px] items-center gap-[4px]">
          <div className="size-[7.500px] border border-[#555] bg-white" />
          Auto-close
        </div>
        <div className="mt-[5px] flex h-[13px] items-end">
          <div className="flex h-[13px] w-[41px] items-center justify-center border border-b-0 border-[#dcdce0] bg-[#fbfbfd]">Horizontal</div>
          <div className="flex h-[11px] w-[30px] items-center justify-center border border-l-0 border-b-0 border-[#dcdce0] bg-[#f1f1f4]">Vertical</div>
        </div>
        <div className="flex h-[266px] w-[155px] shrink-0 flex-col border-[1.500px] border-white border-r-[#dcdce0] border-b-[#dcdce0] bg-[#f0f0f0] pt-[3px] pl-[5px]">
          <div className="leading-[11px]">Current segment:</div>
          <div className="flex h-[14px] items-center">
            <svg viewBox="0 0 12 12" className="h-3 w-[12px]" fill="none" stroke={D} strokeWidth="1"><path d="M1 0v12h10" stroke="#888" /><path d="M2 5h9M3 3v4M10 3v4" /></svg>
            <span className="w-3 pr-[2px] text-right font-bold">&lt;</span>
            <div className="flex h-[14px] w-[90px] items-center border border-[#999] bg-white pl-[2px]">Adding New Segment</div>
            <span className="w-[15px] pl-[4px] font-bold">&gt;</span>
            <div className="flex h-[13px] w-[13px] items-center justify-center border border-[#adadad] bg-[#e4e4e4]">...</div>
          </div>
          <div className="mt-[4px] flex h-[15px] gap-[5px]">
            <SegButton off>
              <path d="M1 3h10M6 7h4v4H6z" />
              <path d="M1 2h2v3H1zM8 2h2v3H8z" fill="#85858a" />
            </SegButton>
            <SegButton>
              <path d="M1 8h8" />
              <circle cx="4.500" cy="8" r="2" fill="#111" />
              <path d="M5 8l2-2V2h4v3L8 6z" fill="#39a02f" stroke="none" />
            </SegButton>
            <SegButton off>
              <path d="M1 3h10M6 7l4 4M10 7l-4 4" />
              <path d="M1 2h2v3H1zM8 2h2v3H8z" fill="#85858a" />
            </SegButton>
          </div>
          <div className="mt-[7px] h-px w-[143px] bg-[#adadad]" />
          <fieldset className="mt-[5px] h-[56px] w-[144px] border border-[#dcdcdc] pl-[6px]">
            <legend className="-ml-px px-[1px] leading-[11px]">Segment</legend>
            <div className="mt-[2px] pl-[2px] leading-[12px]">Type:</div>
            <Select>Smooth curve</Select>
          </fieldset>
          <fieldset className="mt-[4px] h-[107px] w-[144px] border border-[#dcdcdc] pl-[6px]">
            <legend className="-ml-px px-[1px] leading-[11px]">End Point</legend>
            <div className="mt-[2px] pl-[2px] leading-[12px]">Type:</div>
            <Select>Coordinate</Select>
            <div className="mt-[2px] pl-[1px] leading-[12px]">Coordinate:</div>
            <div className="flex h-[13px] items-center">
              <svg viewBox="0 0 12 12" className="mr-[1px] h-3 w-[12px]"><path d="M1 1v10h11" fill="none" stroke="#555" /><circle cx="9" cy="3" r="1.500" fill="#222" /></svg>
              <div className="flex h-[13px] w-[104px] items-center border border-[#888] bg-white pl-[1px] tracking-[-.14px]">1131986.175, 1370889.057</div>
              <div className="flex size-[13px] items-center justify-center border border-[#bbb] bg-[#ddd]"><svg viewBox="0 0 12 12" className="size-[11px]"><path d="M1 8c0-8 9-8 10-2v5H1z" fill="#5b6584" /><circle cx="9" cy="9" r="2.500" fill="#d5e8f5" stroke={B} /></svg></div>
            </div>
            <div className="mt-[1px] pl-[1px] leading-[12px]">Elevation:</div>
            <div className="flex h-[13px] items-center">
              <svg viewBox="0 0 12 12" className="mr-[1px] h-3 w-[12px]"><path d="M2 11l10-5v5z" fill="#aaaab4" /><path d="M1 1v10h11" fill="none" stroke="#555" /><circle cx="9" cy="5" r="1.500" fill="#222" /></svg>
              <div className="h-[13px] w-[104px] border border-[#2686bd] bg-white" />
              <div className="relative flex size-[13px] items-center justify-center">
                <svg viewBox="0 0 12 12" className="size-[12px]"><circle cx="6" cy="6" r="5.600" fill={B} /><path d="M3 3.500L6.500 6 3 8.500z" fill="#fff" /><path d="M8 3.500v5" stroke="#fff" strokeWidth="1.500" /></svg>
                <svg viewBox="0 0 8 12" className="absolute top-[16px] -left-[22px] h-[12px] w-[8px]"><path d="M1 .5v9.500l2.200-2L4.800 11.500l1.400-.6L4.800 7.500h2.700z" fill="#fff" stroke="#222" strokeWidth=".8" /></svg>
              </div>
            </div>
          </fieldset>
          <div className="mt-[5px] flex justify-end gap-[5px] pr-[5px]">
            <Btn className="w-8">Save</Btn>
            <Btn className="w-[33px]">Cancel</Btn>
          </div>
          <div className="mt-[6px] h-px w-[143px] bg-[#adadad]" />
        </div>
        <div className="mt-auto mb-[3px] flex justify-end gap-[3px] pr-[2px]">
          <Btn className="w-[52px]">New</Btn>
          <Btn className="w-[52px]">Close</Btn>
        </div>
      </div>
      <div className={clsx('flex h-[19px] shrink-0 items-stretch pt-px', ui)}>
        <div className="flex w-[74px] items-center gap-[8px] pt-[3px] pl-[3px]"><Glyph name="curveEdit" className="size-[10px]" />Edit Linestring</div>
        <div className="flex flex-1 items-center gap-[4px] bg-[#cfcfd6] text-[#777783]"><Glyph name="page" className="size-[10px]" />Properties</div>
      </div>
    </div>
  );
}

const sideGroups = [
  ['pointPlus', 'segPlus', 'curvePlus', 'curvePlus'],
  ['slash', 'dots', 'tee', 'segDel', 'offset', 'arcs', 'star', 'ring', 'ptsPlus', 'wedge'],
  ['copy', 'move', 'scale', 'mirror', 'rotate', 'explode', 'stackGray', 'spark'],
  ['surfPlus', 'surfEdit', 'surfOrange', 'ticks', 'grid', 'boundary', 'house', 'redLink', 'chartSm', 'heat', 'blocks', 'legend'],
];
const sideHeights = ['h-[87px] pt-[1px]', 'h-[164px] pt-[4px]', 'h-[135px] pt-[3px]', 'flex-1 pt-[3px]'];
const withCaret = ['0-0', '0-2', '3-0'];

function SideTools() {
  return (
    <div className="flex w-[22px] shrink-0 flex-col bg-[#cfcfd6]">
      {sideGroups.map((group, g) => (
        <div key={g} className={clsx('flex shrink-0 flex-col', sideHeights[g])}>
          <div className="mx-[2px] h-[4px] shrink-0 border-y border-dotted border-[#a4a4ad]" />
          <div className="flex flex-col pt-[2px]">
            {group.map((name, i) => (
              <div key={i} className="flex h-[14.600px] items-center pl-[6px]">
                <Glyph name={name} />
                {withCaret.includes(`${g}-${i}`) && <Caret w="w-[5px]" />}
              </div>
            ))}
          </div>
          <div className="mt-auto flex h-[6px] shrink-0 items-center justify-end bg-[#bcbcc2] pr-[3px]">
            <div className="border-y-[2px] border-l-[3px] border-y-transparent border-l-[#333]" />
          </div>
        </div>
      ))}
    </div>
  );
}

function StatusBar() {
  return (
    <div className="flex h-4 shrink-0 items-center bg-[#f0f0f0]">
      <div className={clsx('w-[829px] shrink-0 pl-[2px]', sans)}>Elevation</div>
      <Cell name="terminal" w="w-[13px]" />
      <Cell name="boxPick" w="w-[13px]" on />
      <Cell name="polyPick" w="w-[13px]" />
      <Cell name="half" w="w-[13px]" />
      <Cell name="gridPlain" w="w-[14px]" />
      <Cell name="angle" w="w-[13.500px]" />
      <Cell name="dim" w="w-[13px]" on />
      <Cell name="corner" w="w-[13.500px]" />
      <span className="ml-[5px] w-[21px]">Snap</span>
      <Cell name="world" w="w-[12px]" />
      <span className="ml-[3px] w-[40px] whitespace-nowrap">US Survey</span>
      <span className="w-[21px]">Foot</span>
      <span className="w-[19px]">Grid</span>
      <span className="w-[27px]">Default</span>
      <div className="flex w-[14px] justify-center"><Glyph name="record" className="size-[9px]" /></div>
      <span className="w-[17px] pl-[4px]">1</span>
      <Cell name="bracket" w="w-[11px]" />
      <span className="ml-[4px]">16.478 ft,26.061 ft</span>
      <div className="ml-auto flex h-full w-[14px] items-center justify-center bg-[#fbe08f]"><Glyph name="list" className="size-[10px]" /></div>
    </div>
  );
}

const chrome = (badge: string) => (
  <>
    <circle cx="10" cy="10" r="9" fill="#3aa757" />
    <path d="M18 5.500A9 9 0 0 1 10 19l3-8z" fill="#fbc116" />
    <path d="M2 5.500a9 9 0 0 1 16 0L10 10z" fill="#e34133" />
    <circle cx="10" cy="9.500" r="4.200" fill="#4688f1" stroke="#fff" strokeWidth="1.400" />
    <circle cx="15" cy="15.500" r="4" fill={badge} />
  </>
);

const apps: { id: string; run: boolean; art: ReactNode }[] = [
  { id: 'start', run: false, art: <path d="M3 5l6-1v6H3zM10 4l7-1v7h-7zM3 11h6v6l-6-1zM10 11h7v7l-7-1z" fill="#fff" /> },
  { id: 'search', run: false, art: <><circle cx="12" cy="8" r="5" fill="none" stroke="#fff" strokeWidth="1.300" /><path d="M8.500 12L3 18" stroke="#fff" strokeWidth="1.500" /></> },
  { id: 'explorer', run: true, art: <><path d="M1 3h7l2 2h9v13H1z" fill="#f2c34e" /><path d="M1 8h18v10H1z" fill="#fbdc86" /><path d="M4 18v-6h12v6h-4v-2H8v2z" fill="#3c8fc9" /></> },
  { id: 'outlook', run: true, art: <><path d="M6 1h14v17H6z" fill="#2a9fe5" /><path d="M6 9l7 5 7-5v9H6z" fill="#1667b5" /><path d="M0 5h11v11H0z" fill="#0f6cbf" /><circle cx="5.500" cy="10.500" r="2.800" fill="none" stroke="#fff" strokeWidth="1.600" /></> },
  { id: 'tbc', run: true, art: <><circle cx="10" cy="10" r="9" fill="#e9bd1e" /><path d="M6 4.500l9 5.500-9 5.500zM6 10h8" fill="none" stroke="#413308" strokeWidth="1.500" /></> },
  { id: 'chrome1', run: false, art: chrome('#b8c3cc') },
  { id: 'chrome2', run: false, art: chrome('#70483c') },
  { id: 'teams', run: true, art: <><circle cx="12" cy="4" r="3" fill="#7b83eb" /><circle cx="17" cy="5" r="2" fill="#5059c9" /><path d="M7 7h13v6a5 5 0 0 1-10 5z" fill="#6068d0" /><path d="M0 5h11v11H0z" fill="#444ebd" /><path d="M3 8h5M5.500 8v6" stroke="#fff" strokeWidth="1.600" /><circle cx="15.500" cy="15.500" r="4" fill="#8dc63f" /><path d="M13.500 15.500l1.500 1.500 2.500-3" stroke="#fff" fill="none" /></> },
  { id: 'trimble', run: true, art: <><circle cx="10" cy="10" r="9.500" fill="#159bd7" /><path d="M4 7c4-5 11-4 9 0-1 3-6 1-7 5-1 5 6 5 9 1M7 11c1-2 1-3 2-4" fill="none" stroke="#fff" strokeWidth="2" /></> },
  { id: 'camtasia', run: true, art: <><path d="M1 0h18v20H1z" fill="#ef5847" /><path d="M15 5H6v10h9" fill="none" stroke="#fff" strokeWidth="3" /></> },
];

function Taskbar() {
  return (
    <div className="flex h-[27px] shrink-0 items-stretch bg-[#101010] text-white">
      {apps.map((a) => (
        <div key={a.id} className={clsx('flex w-[32.800px] shrink-0 flex-col items-center justify-between', a.id === 'tbc' && 'bg-[#353535]', a.id === 'start' && '-ml-[1px]')}>
          <svg viewBox="0 0 20 20" className="mt-[5px] size-4">{a.art}</svg>
          {a.run && <div className={clsx('h-[2px] bg-[#6eaee4]', a.id === 'tbc' ? 'w-full' : 'w-[27px]')} />}
        </div>
      ))}
      <div className="ml-auto flex items-center">
        <svg viewBox="0 0 60 14" className="h-[14px] w-[60px]" fill="none" stroke="#eee">
          <path d="M1 9l4-4 4 4" />
          <rect x="17.500" y="1" width="6" height="9" rx="2.500" fill="#eee" />
          <path d="M16 7c0 6 9 6 9 0M20.500 11v3" />
          <path d="M32 5h2l3-3v10l-3-3h-2zM39 5v4M41 3.500c1 2 1 5 0 7M43 2c2 3 2 7 0 10" strokeWidth=".8" />
          <path d="M50 11c0-4 3-7 8-8M52 12c0-3 2-6 6-7M54 12c0-2 2-4 4-4" strokeWidth=".9" />
          <circle cx="57" cy="11" r="1" fill="#eee" />
        </svg>
        <div className="ml-[4px] w-[38px] text-center leading-[12px] whitespace-nowrap">
          <div>4:57 PM</div>
          <div>3/17/2021</div>
        </div>
        <svg viewBox="0 0 12 12" className="mr-[12px] ml-[11px] size-3" fill="none" stroke="#eee"><path d="M1 1h10v8H8l-2 2-1-2H1z" /></svg>
        <div className="mr-[3px] h-full w-px bg-[#555]" />
      </div>
    </div>
  );
}

export default function App() {
  return (
    <div className={clsx('flex h-[720px] w-[1280px] flex-col overflow-hidden bg-[#cfcfd6] leading-none text-[#24242c]', ui)}>
      <QuickAccess />
      <MenuTabs />
      <Ribbon />
      <div className="h-[2px] shrink-0 bg-[#b0b0b7]" />
      <div className={clsx('flex h-[580px] shrink-0 border-r border-[#55555c]', sans)}>
        <LeftPane />
        <div className="w-[3px] shrink-0 border-r border-[#a8a8ad] bg-[#f5f5f7]" />
        <PlanView />
        <div className="w-[3px] shrink-0 border-l border-[#a8a8ad] bg-[#f5f5f7]" />
        <EditPane />
        <SideTools />
      </div>
      <StatusBar />
      <Taskbar />
    </div>
  );
}
